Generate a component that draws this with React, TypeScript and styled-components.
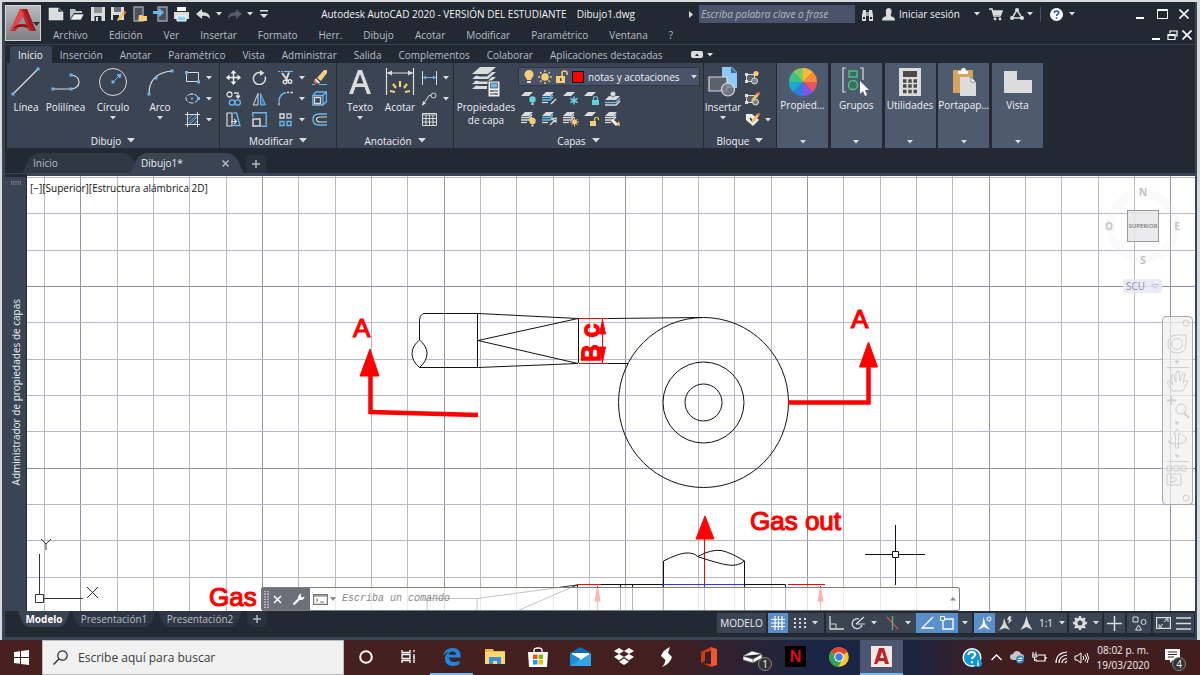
import React from "react";
import styled, { createGlobalStyle, css } from "styled-components";

const c = {
  bar: "#222933",
  panel: "#3b4453",
  tile: "#4e5a6e",
  line: "#2a323e",
  text: "#eef0f2",
  dim: "#b9bec5",
  icon: "#dcdcdc",
  blue: "#66b8ee",
  amber: "#f8cd74",
  active: "#5b8fc9",
};

const ui = `"Open Sans", "Noto Sans", sans-serif`;

const GlobalStyle = createGlobalStyle`
  *, *::before, *::after { box-sizing: border-box; }
  html, body { margin: 0; height: 100%; }
  #root { height: 100%; }
  body { font-family: ${ui}; font-size: 10px; line-height: 14px; color: ${c.text}; background: #d8dadc; overflow: hidden; }
  button, input, select { font: inherit; color: inherit; border: 0; padding: 0; margin: 0; background: none; }
  button { cursor: pointer; }
`;

/* ---------- icons ---------- */

const Svg = styled.svg`
  display: block;
  flex: none;
`;

type IconDef = { w: number; h: number; art: React.ReactNode };

const sheet = (x: number, y: number, fill = c.icon) => (
  <path d={`M${x + 4} ${y}h8l-4 4h-8z`} fill={fill} />
);
const stack = (x: number, y: number, mid = c.icon) => (
  <>
    {sheet(x, y)}
    <path d={`M${x} ${y + 5.5}h8l3-3M${x} ${y + 8}h8l3-3`} stroke={mid} strokeWidth="1.4" fill="none" />
    <path d={`M${x} ${y + 10.5}h6`} stroke={c.icon} strokeWidth="1.2" fill="none" />
  </>
);
const wheelColors = ["#f9b934", "#fb8d3a", "#e9555a", "#8255e6", "#2f7be0", "#1aa9cf", "#3fbf8a", "#7fca5b"];
const wheel = wheelColors.map((f, i) => {
  const a = ((i * 45 - 90) * Math.PI) / 180;
  const b = (((i + 1) * 45 - 90) * Math.PI) / 180;
  return (
    <path
      key={f}
      fill={f}
      d={`M15 15L${15 + 14 * Math.cos(a)} ${15 + 14 * Math.sin(a)}A14 14 0 0 1 ${15 + 14 * Math.cos(b)} ${15 + 14 * Math.sin(b)}z`}
    />
  );
});
const pencil = (
  <g>
    <path d="M8 12l5-6 2 2-5 6-3 1z" fill="#f4c25c" />
    <path d="M13 6l1.500-1.500 2 2L15 8z" fill="#e8695a" />
  </g>
);

const icons: Record<string, IconDef> = {
  caret: { w: 6, h: 4, art: <path d="M0 0h6L3 3.500z" fill={c.icon} /> },
  caretBig: { w: 8, h: 5, art: <path d="M0 0h8L4 4.500z" fill={c.icon} /> },
  play: { w: 4, h: 7, art: <path d="M0 0l4 3.500L0 7z" fill={c.icon} /> },
  logo: {
    w: 36, h: 36,
    art: (
      <>
        <path d="M14 3h7l9 22h-7l-2-4h-8l-4 4H4z" fill="#c4272d" />
        <path d="M14 3l-10 22 6-3 8-14z" fill="#e5474b" />
        <path d="M12 18l5-8 3 8z" fill="#8f9297" />
        <path d="M9 20q8-4 14 1l-2 1q-6-3-14 1z" fill="#8e171c" />
        <path d="M17 3l9 22h4L21 3z" fill="#a01d22" />
        <path d="M27 16h7l-3.500 4z" fill="#2b2f36" />
      </>
    ),
  },
  file: { w: 16, h: 14, art: <path d="M1 1h9l5 4v8H1zM10 1v4h5" fill={c.icon} stroke="#fff" strokeWidth=".5" /> },
  open: { w: 16, h: 14, art: <><path d="M1 12V2h5l1 2h6v2H5z" fill="#bfc1c4" /><path d="M5 7h10l-3 6H1z" fill="#eee" stroke={c.bar} strokeWidth=".6" /></> },
  save: { w: 16, h: 16, art: <><path d="M1 1h14v14H1z" fill={c.icon} /><path d="M4 1h8v6H4z" fill="#8c9199" /><path d="M4.500 10h7v5h-7z" fill={c.bar} /><path d="M6 11h2v4H6z" fill={c.icon} /></> },
  saveAs: { w: 17, h: 16, art: <><path d="M1 1h13v13H1z" fill={c.icon} /><path d="M4 1h7v5H4z" fill="#6a7079" /><path d="M3 9h6v5H3z" fill={c.bar} />{pencil}</> },
  openWeb: { w: 16, h: 16, art: <><path d="M2 1h9v14H2z" fill="#4a515d" stroke="#9ba0a7" strokeWidth="1.400" /><path d="M7 9h3l1 1h4v5H6z" fill={c.amber} /></> },
  saveWeb: { w: 16, h: 16, art: <><path d="M5 1h9v14H5z" fill="#4a515d" stroke="#9ba0a7" strokeWidth="1.400" /><path d="M0 5h6V2l5 4.500L6 11V8H0z" fill={c.blue} /></> },
  print: { w: 17, h: 15, art: <><path d="M4 0h9v4H4z" fill="#fff" /><path d="M1 5h15v7H1z" fill={c.icon} /><path d="M4 9h9v5H4z" fill="#8fcdf5" stroke="#fff" /></> },
  undo: { w: 15, h: 11, art: <path d="M0 5l6-5v3q8 0 8 7-3-4-8-3v3z" fill={c.icon} /> },
  redo: { w: 15, h: 11, art: <path d="M15 5L9 0v3Q1 3 1 10q3-4 8-3v3z" fill="#555c67" /> },
  custom: { w: 8, h: 8, art: <path d="M0 0h8v1.500H0zM0 4h8L4 8z" fill={c.icon} /> },
  binoc: { w: 13, h: 13, art: <><path d="M1 13V7l1-5h3v11zM8 13V2h3l1 5v6z" fill={c.icon} /><path d="M5 4h3v4H5z" fill="#9aa0a8" /><path d="M2 9h2v2H2zM9 9h2v2H9z" fill={c.bar} /></> },
  user: { w: 13, h: 13, art: <path d="M6.500 0C10 0 10 4 9 6q-.5 2 .5 2.500Q13 9 13 12.500H0Q0 9 3.500 8.500 4.500 8 4 6 3 0 6.500 0z" fill={c.icon} /> },
  cart: { w: 14, h: 13, art: <><path d="M0 1h3l2 7h6l2-5H4" stroke={c.icon} strokeWidth="1.600" fill="none" /><path d="M4 3h9l-2 4H5z" fill={c.icon} /><circle cx="6" cy="11" r="1.400" fill={c.icon} /><circle cx="11" cy="11" r="1.400" fill={c.icon} /></> },
  a360: { w: 14, h: 13, art: <><path d="M7 2L2 10h10z" stroke={c.icon} strokeWidth="1.500" fill="none" /><circle cx="7" cy="2" r="2" fill={c.icon} /><circle cx="2" cy="10" r="2" fill={c.icon} /><circle cx="12" cy="10" r="2" fill={c.icon} /></> },
  help: { w: 13, h: 13, art: <><circle cx="6.500" cy="6.500" r="6.500" fill="#fff" /><path d="M4.300 5q0-2 2.200-2t2.200 1.800q0 1-1.200 1.600-.9.500-.9 1.600M6.500 9.200v1.500" stroke="#2450b0" strokeWidth="1.600" fill="none" /></> },
  min: { w: 10, h: 11, art: <path d="M1 9h8" stroke="#fff" strokeWidth="2" /> },
  max: { w: 11, h: 10, art: <><path d="M.5.500h10v9H.5z" stroke="#fff" fill="none" /><path d="M0 1h11" stroke="#fff" strokeWidth="2" /></> },
  restore: { w: 11, h: 11, art: <path d="M3 3.500V1h7v5H8M1 4.500h7v5H1zM1 5.500h7" stroke="#fff" strokeWidth="1.200" fill="none" /> },
  close: { w: 10, h: 10, art: <path d="M.5.500l9 9M9.500.500l-9 9" stroke="#fff" strokeWidth="1.600" /> },
  closeSm: { w: 9, h: 9, art: <path d="M1 1l7 7M8 1L1 8" stroke="#fff" strokeWidth="1.500" /> },
  closeDim: { w: 7, h: 7, art: <path d="M.5.500l6 6M6.500.500l-6 6" stroke="#b5b9bf" strokeWidth="1.500" /> },
  plus: { w: 8, h: 8, art: <path d="M4 0v8M0 4h8" stroke="#b5b9bf" strokeWidth="1.500" /> },
  pill: { w: 12, h: 7, art: <><rect width="12" height="7" rx="2" fill={c.icon} /><path d="M4 5l2-2.500L8 5z" fill={c.bar} /></> },

  line: { w: 30, h: 30, art: <><path d="M2 27L27 2" stroke={c.icon} strokeWidth="1.200" /><path d="M.5 25.500h3v3h-3zM25.500.500h3v3h-3z" fill={c.blue} /></> },
  poly: { w: 30, h: 30, art: <><path d="M2 22h18q8-1 8-7t-8-7" stroke={c.icon} strokeWidth="1.200" fill="none" /><path d="M.5 20.500h3v3h-3zM18.500 20.500h3v3h-3zM18.500 6.500h3v3h-3z" fill={c.blue} /></> },
  circle: { w: 30, h: 30, art: <><circle cx="15" cy="15" r="13.500" stroke={c.icon} fill="none" /><path d="M15 15l6-6M23 7l-1 4-3-3z" stroke={c.blue} fill={c.blue} /><path d="M13.500 13.500h3v3h-3z" fill={c.blue} /></> },
  arc: { w: 30, h: 30, art: <><path d="M4 27Q4 6 27 4" stroke={c.icon} strokeWidth="1.200" fill="none" /><path d="M2.500 25.500h3v3h-3zM9.500 9.500h3v3h-3zM25.500 2.500h3v3h-3z" fill={c.blue} /></> },
  rect: { w: 15, h: 13, art: <><path d="M1.500 1.500h12v9h-12z" stroke={c.icon} fill="none" /><path d="M0 0h3v3H0zM12 9.500h3v3h-3z" fill={c.blue} /></> },
  ellipse: { w: 15, h: 13, art: <><ellipse cx="7" cy="6.500" rx="6" ry="4.500" stroke={c.icon} fill="none" strokeDasharray="5 1.500" /><path d="M6 5.500h2v2H6zM12 5h3v3h-3zM6 1h2v2H6z" fill={c.blue} /></> },
  hatch: { w: 15, h: 15, art: <><path d="M2.500 0v15M12.500 0v15M0 2.500h15M0 12.500h15" stroke={c.icon} /><path d="M3.500 7l4-4M3.500 11l8-8M5 12l7-7M9 12l3-3" stroke={c.blue} /></> },

  move: { w: 15, h: 15, art: <><path d="M7.500 1v13M1 7.500h13" stroke="#eee" strokeWidth="1.500" /><path d="M7.500 0l3 3.500h-6zM7.500 15l3-3.500h-6zM0 7.500l3.500-3v6zM15 7.500l-3.500-3v6z" fill="#eee" /></> },
  rotate: { w: 15, h: 15, art: <><path d="M9.500 3A6 6 0 1 0 13 6.500" stroke={c.icon} strokeWidth="1.500" fill="none" /><path d="M8 0v6l4.500-3z" fill={c.icon} /></> },
  trim: { w: 15, h: 15, art: <><path d="M0 1.500h6" stroke={c.blue} strokeDasharray="2 1" /><path d="M6 1.500h9" stroke={c.blue} strokeWidth="1.200" /><path d="M4 3l6 8M11 2.500L8 10" stroke={c.icon} strokeWidth="2" /><circle cx="7" cy="12" r="1.800" stroke={c.icon} strokeWidth="1.400" fill="none" /><circle cx="12" cy="11.500" r="1.800" stroke={c.icon} strokeWidth="1.400" fill="none" /></> },
  erase: { w: 15, h: 15, art: <><path d="M5 8l7-8h3v3L9 11z" fill="#f6cc80" /><path d="M4 8.500l4 4-1.500 1.200L2.500 10z" fill="#fff" /><path d="M2.500 9.500l3.500 4H3L1.500 12z" fill="#ea6158" /><path d="M0 14.500h3M7 14.500h8" stroke={c.blue} /></> },
  copy: { w: 15, h: 15, art: <><circle cx="3.500" cy="3.500" r="2.500" stroke={c.icon} strokeWidth="1.300" fill="none" /><path d="M8 2h4v4M10 4.500L12 7l2-2.500" stroke={c.icon} strokeWidth="1.300" fill="none" /><circle cx="6" cy="11.500" r="2.700" stroke={c.blue} fill="none" strokeWidth="1.300" /><circle cx="11.700" cy="11.500" r="2.700" stroke={c.blue} fill="none" strokeWidth="1.300" /></> },
  mirror: { w: 15, h: 14, art: <><path d="M6 1.500V13H1.200z" stroke={c.icon} fill="none" /><path d="M8.500 1.500V13h5z" stroke={c.blue} fill="#3479b5" /></> },
  fillet: { w: 15, h: 15, art: <><path d="M1 11Q1 3 8 1.500" stroke={c.blue} strokeWidth="1.500" fill="none" /><path d="M9 1.500h2M12.500 1.500h2.500M1 11.500v3" stroke={c.icon} strokeWidth="1.300" /></> },
  cube: { w: 15, h: 15, art: <><path d="M4 1h10.500v9.500L11 14H.8V4.500zM11 4.500V14M11 4.500L14.500 1M11 4.500H.8" stroke={c.blue} strokeWidth="1.300" fill="none" /><path d="M2.500 6.500h6v6h-6z" stroke={c.icon} strokeWidth="1.300" fill="none" /></> },
  stretch: { w: 15, h: 15, art: <><path d="M1 1h5v13H1zM5 9.500h5M8 7l2.500 2.500L8 12" stroke={c.icon} strokeWidth="1.200" fill="none" /><path d="M7.500 1h3L14 13.500H7" stroke={c.blue} fill="none" strokeWidth="1.300" /></> },
  scale: { w: 15, h: 15, art: <><path d="M.8 5V.8h13.400v13.400H9" stroke={c.blue} fill="none" strokeWidth="1.400" /><path d="M1 7h7v7H1z" stroke={c.icon} fill="none" strokeWidth="1.500" /></> },
  array: { w: 15, h: 14, art: <><path d="M2 1h4v4H2z" stroke={c.icon} fill="none" strokeWidth="1.400" /><path d="M9 1h4v4H9z" stroke="#b9c6d2" fill="none" strokeWidth="1.400" /><path d="M9 8.500h4v4H9zM2 8.500h4v4H2z" stroke={c.blue} fill="none" strokeWidth="1.400" /></> },
  offset: { w: 15, h: 13, art: <><path d="M15 1H7Q1 1 1 6.500T7 12h8" stroke={c.blue} strokeWidth="1.400" fill="none" /><path d="M15 4H8Q4.500 4 4.500 6.500T8 9h7" stroke={c.icon} fill="none" strokeWidth="1.200" /></> },

  text: { w: 30, h: 30, art: <path d="M4 27L13 3h4l9 24h-4l-2.500-7h-9L8 27zM11.500 16.500h7L15 7z" fill={c.icon} fillRule="evenodd" /> },
  dim: { w: 30, h: 30, art: <><path d="M1.500 1v27M28.500 1v27M2 6h26" stroke={c.icon} strokeWidth="1.200" /><path d="M2 6l5-2.500v5zM28 6l-5-2.500v5z" fill={c.icon} /><g stroke={c.amber} strokeWidth="2.200"><path d="M15 14v6M8 17l3 4M22 17l-3 4M5 24l5 1M25 24l-5 1" /></g></> },
  dimLin: { w: 15, h: 14, art: <><path d="M.5 0v14M14.500 0v14" stroke={c.icon} /><path d="M1 6.500h13" stroke={c.blue} /><path d="M1 6.500l3-2v4zM14 6.500l-3-2v4z" fill={c.blue} /></> },
  leader: { w: 15, h: 14, art: <><path d="M9 3.500H7L1 13" stroke={c.icon} fill="none" /><circle cx="11.500" cy="3.500" r="2.500" stroke={c.icon} fill="none" /><path d="M0 14l1-5 3 2z" fill={c.icon} /></> },
  table: { w: 15, h: 13, art: <path d="M.5.500h14v12H.5zM0 2h15M0 5.500h15M0 9h15M4 2v11M7.500 2v11M11 2v11" stroke={c.icon} fill="none" /> },

  layerProps: { w: 30, h: 30, art: <><path d="M9 0h16l-8 7H1z" fill={c.icon} /><path d="M5 8.500L1 12h16l8-7h-4l-5 4.500H9zM5 13.500L1 17h16l8-7h-4l-5 4.500H9zM5 18.500L1 22h15v-3H9z" fill={c.icon} /><path d="M17 14h12v16H17z" fill="#eee" stroke={c.panel} /><path d="M19.500 16h7v5h-7z" fill={c.blue} stroke="#333" strokeWidth=".6" /><path d="M19 24h8M19 27h8M21 23v2M25 26v2" stroke="#444" /></> },
  bulb: { w: 10, h: 14, art: <><path d="M5 0a4.500 4.500 0 0 1 2.800 8L7 10H3L2.200 8A4.500 4.500 0 0 1 5 0z" fill={c.amber} /><path d="M3 11h4v2H3z" fill="#ddd" /></> },
  sun: { w: 14, h: 14, art: <><circle cx="7" cy="7" r="3.800" fill={c.amber} /><path d="M7 0v2M7 12v2M0 7h2M12 7h2M2 2l1.500 1.500M10.500 10.500L12 12M12 2l-1.500 1.500M3.500 10.500L2 12" stroke={c.amber} strokeWidth="1.400" /></> },
  lock: { w: 12, h: 13, art: <><path d="M0 6h9v7H0z" fill={c.amber} /><path d="M6 6V3q0-2 2.500-2T11 3v2" stroke={c.amber} strokeWidth="1.500" fill="none" /><path d="M4 8h1.500v3H4z" fill="#5a4a20" /></> },
  red: { w: 12, h: 12, art: <path d="M.5.500h11v11H.5z" fill="#f00" stroke="#111" /> },
  lyOff: { w: 16, h: 15, art: <>{sheet(0, 1)}<circle cx="11.500" cy="8.500" r="3.200" fill="#62d3e0" /><path d="M10.500 12h2v2h-2z" fill="#ddd" /></> },
  lyIso: { w: 16, h: 15, art: <>{stack(0, 1, c.blue)}<path d="M9 13l5-5" stroke={c.icon} strokeWidth="1.500" /></> },
  lyFrz: { w: 16, h: 15, art: <>{sheet(0, 1)}<path d="M11 5.500v8M7.500 7.500l7 4M7.500 11.500l7-4" stroke="#62d3e0" strokeWidth="1.600" /></> },
  lyLock: { w: 16, h: 15, art: <>{sheet(0, 1)}<path d="M8 9h7v5H8z" fill="#62d3e0" /><path d="M9.500 9V7q0-1.500 2-1.500t2 1.500v2" stroke="#62d3e0" strokeWidth="1.200" fill="none" /></> },
  lyCur: { w: 16, h: 15, art: <><path d="M4 5h11l-4 4H0z" fill={c.icon} /><path d="M0 11.500h11l4-4" stroke={c.blue} strokeWidth="1.600" fill="none" /><path d="M0 14h11l4-4" stroke={c.icon} strokeWidth="1.500" fill="none" /><circle cx="8" cy="3" r="2.800" fill="#ddd" stroke={c.panel} strokeWidth=".6" /></> },
  lyOn: { w: 16, h: 15, art: <>{stack(0, 0)}<circle cx="11.500" cy="9" r="3.200" fill={c.amber} /><path d="M10.500 12.500h2v2h-2z" fill="#ddd" /></> },
  lyUniso: { w: 16, h: 15, art: <>{stack(0, 0, c.blue)}<path d="M8 13l5-5M14 6v4l-4-3z" stroke={c.icon} strokeWidth="1.300" /></> },
  lyThaw: { w: 16, h: 15, art: <>{stack(0, 0)}<circle cx="11.500" cy="10" r="2.400" fill={c.amber} /><path d="M11.500 5.500v9M7 10h9M8.500 7l6 6M14.500 7l-6 6" stroke={c.amber} /></> },
  lyUnl: { w: 16, h: 15, art: <>{sheet(0, 0)}<path d="M6 9h6v5H6z" fill={c.amber} /><path d="M10.500 9V7q0-1.500 2-1.500t2 1.500v1" stroke={c.amber} strokeWidth="1.200" fill="none" /></> },
  lyMatch: { w: 16, h: 15, art: <>{stack(0, 0)}<path d="M7 8l5 5" stroke="#eee" strokeWidth="3" /><path d="M11 13l3-4 1 5z" fill={c.amber} /></> },

  insert: { w: 30, h: 30, art: <><path d="M14 0h10l5 5v16H14z" fill="#8ccbf8" /><path d="M23 0v6h6z" fill="#2c6ea8" /><path d="M1 10h18v14H1z" fill="#5b626e" stroke={c.icon} strokeWidth="1.200" /><circle cx="20" cy="22.500" r="6.500" fill="#7b818b" fillOpacity=".8" stroke={c.icon} strokeWidth="1.200" /></> },
  blkNew: { w: 15, h: 15, art: <><path d="M1.500 4.500h8v7h-8z" stroke={c.icon} fill="#5b626e" /><path d="M0 3h3v3H0zM0 10h3v3H0z" fill={c.icon} /><circle cx="9.500" cy="11" r="3" fill="#7b818b" stroke={c.icon} /><circle cx="11" cy="3.500" r="2.600" fill={c.amber} /></> },
  blkEdit: { w: 16, h: 15, art: <><path d="M1.500 4.500h8v7h-8z" stroke={c.icon} fill="#5b626e" /><path d="M0 3h3v3H0zM0 10h3v3H0z" fill={c.icon} /><circle cx="10.500" cy="11" r="3" fill="#7b818b" stroke={c.icon} /><g transform="translate(-1 -4)">{pencil}</g></> },
  blkAttr: { w: 16, h: 15, art: <><path d="M1 2h6l7 6-6 6-7-6z" fill="#eee" /><path d="M5 6l3 4" stroke="#333" strokeWidth="1.500" /><g transform="translate(-1 -4)">{pencil}</g></> },

  wheel: { w: 30, h: 30, art: wheel },
  group: { w: 30, h: 30, art: <><path d="M5 1H2v24h3M19 1h3v12" stroke={c.icon} strokeWidth="1.200" fill="none" /><path d="M8 4h8v6H8z" stroke="#4cc47b" strokeWidth="1.400" fill="#3b6d5c" /><circle cx="12" cy="18" r="4.500" stroke="#4cc47b" strokeWidth="1.400" fill="#3b6d5c" /><path d="M19 14v13l3-3 2 5 2-1-2-5h4z" fill="#fff" /></> },
  calc: { w: 30, h: 30, art: <><path d="M4 1h22v28H4z" fill={c.icon} /><path d="M8 4h14v6H8z" fill="#4a4a4a" /><path d="M8 14h14M8 19h14M8 24.500h14" stroke="#4a4a4a" strokeWidth="3.500" strokeDasharray="3.500 1.750" /></> },
  clip: { w: 30, h: 30, art: <><path d="M4 3h20v23H4z" fill="#d9a15e" /><path d="M9 4h3q0-3 2.500-3T17 4h2v3H9z" fill="#fff" /><path d="M11 10h11l5 5v14H11z" fill={c.icon} /><path d="M22 10v5h5z" fill="#fff" stroke="#555" strokeWidth=".6" /></> },
  view: { w: 30, h: 30, art: <path d="M1 4h13v9h15v13H1z" fill={c.icon} /> },

  stGrid: { w: 14, h: 14, art: <path d="M4 0v14M7.500 0v14M11 0v14M0 3.500h14M0 7h14M0 10.500h14" stroke="#fff" strokeWidth="1.200" /> },
  stSnap: { w: 12, h: 12, art: <path d="M0 2h12M0 6h12M0 10h12" stroke={c.icon} strokeWidth="2" strokeDasharray="2 3" /> },
  stOrtho: { w: 15, h: 14, art: <><path d="M1 0v13h14" stroke={c.icon} strokeWidth="1.300" fill="none" /><path d="M2 8h5v5" stroke={c.icon} fill="none" /></> },
  stPolar: { w: 15, h: 14, art: <><path d="M9 3a5 5 0 1 0 3 6" stroke={c.icon} strokeWidth="1.300" fill="none" /><path d="M6 8l8-7M6 8h9" stroke={c.icon} strokeWidth="1.200" /></> },
  stIso: { w: 13, h: 14, art: <><path d="M1 1l11 12" stroke="#c9505a" strokeWidth="1.300" /><path d="M6.500 0v14" stroke="#59b96c" strokeWidth="1.300" /></> },
  stTrack: { w: 14, h: 14, art: <path d="M13 1L2 12h12" stroke="#fff" strokeWidth="1.300" fill="none" /> },
  stSnapObj: { w: 15, h: 15, art: <><path d="M3 3h10v10H3z" stroke="#fff" strokeWidth="1.300" fill="none" /><path d="M.5.500h4v4h-4z" stroke="#fff" fill={c.active} /></> },
  stAnnoA: { w: 15, h: 15, art: <><path d="M6.500 1l2 7 4.500 6-6-3-6 3 4.500-6z" fill="#fff" /><circle cx="12" cy="3" r="2" stroke="#fff" fill="none" /></> },
  stAnnoB: { w: 15, h: 15, art: <path d="M6 2l2 6 4 6-5-2-6 2 4-6zM11 0l3 1-2 2 2 1-4 4 1-4H9z" fill={c.icon} /> },
  stAnnoC: { w: 13, h: 14, art: <path d="M6.500 0l2 7 4 7-6-3-6 3 4-7z" fill={c.icon} /> },
  gear: { w: 14, h: 14, art: <><circle cx="7" cy="7" r="4" stroke={c.icon} strokeWidth="3" fill="none" /><path d="M7 0v3M7 11v3M0 7h3M11 7h3M2 2l2 2M10 10l2 2M12 2l-2 2M4 10l-2 2" stroke={c.icon} strokeWidth="2.400" /></> },
  stPlus: { w: 15, h: 15, art: <path d="M7.500 0v15M0 7.500h15" stroke={c.icon} strokeWidth="1.500" /> },
  stIsol: { w: 15, h: 15, art: <><path d="M1 1h5v5H1z" stroke={c.icon} fill="none" /><circle cx="11.500" cy="6" r="2.500" stroke={c.icon} fill="none" /><path d="M6.500 9l3 5h-6z" stroke={c.icon} fill="none" /></> },
  stFull: { w: 15, h: 12, art: <><path d="M.6.600h13.800v10.800H.6z" stroke={c.icon} fill="none" strokeWidth="1.200" /><path d="M8 5l4-3M12 2H9M12 2v3M7 7l-4 3M3 10h3M3 10V7" stroke={c.icon} /></> },
  stMenu: { w: 15, h: 13, art: <path d="M0 1h15M0 6.500h15M0 12h15" stroke={c.icon} strokeWidth="1.600" /> },
  wrench: { w: 13, h: 13, art: <><path d="M1.500 11.500L7 6" stroke="#fff" strokeWidth="2.400" /><path d="M12.500 3.500Q12 7.500 8 7 5.500 6.500 6 4.500 6.500 1 9.500.500L8.500 3l1.500 1.500z" fill="#fff" /></> },
  prompt: { w: 15, h: 11, art: <><path d="M.6.600h13.800v9.800H.6zM0 2h15" stroke="#777" fill="none" strokeWidth="1.200" /><path d="M3 4.500l2 1.500-2 1.500M7 8h4" stroke="#777" fill="none" /></> },
  caretGrey: { w: 6, h: 4, art: <path d="M0 0h6L3 4z" fill="#888" /> },
  caretUp: { w: 6, h: 4, art: <path d="M0 3.500h6L3 0z" fill="#888" /> },
  caretFaint: { w: 8, h: 5, art: <path d="M.5.500h7L4 4.500z" fill="none" stroke="#c3c7d6" /> },
  grip: { w: 5, h: 17, art: <path d="M1 0v17M4 0v17" stroke="#ddd" strokeWidth="1.400" strokeDasharray="1.300 1.300" /> },
  dots: { w: 10, h: 4, art: <path d="M0 .8h10M0 3h10" stroke="#9aa1ab" strokeWidth="1.200" strokeDasharray="1.200 1" /> },

  win: { w: 15, h: 15, art: <path d="M0 2l6-.8V7H0zM7 1l8-1v7H7zM0 8h6v5.800L0 13zM7 8h8v7l-8-1z" fill="#fff" /> },
  search: { w: 15, h: 15, art: <><circle cx="9.500" cy="5.500" r="4.700" stroke="#222" strokeWidth="1.200" fill="none" /><path d="M6 9l-5.500 5.500" stroke="#222" strokeWidth="1.300" /></> },
  cortana: { w: 14, h: 14, art: <circle cx="7" cy="7" r="5.800" stroke="#fff" strokeWidth="2" fill="none" /> },
  taskview: { w: 15, h: 13, art: <path d="M1 0v2.500h8V0M1 13v-2.500h8V13M1 4.500h8v4H1zM13 0v2M13 4v2M13 8v5M12 7h2" stroke="#fff" strokeWidth="1.300" fill="none" /> },
  edge: { w: 18, h: 18, art: <path d="M0 8Q2 0 9.500 0 18 0 18 9.500H6q.5 4.500 5.500 4.500 3 0 5-1.500v3.800Q14 18 10 18q-8 0-8-8 0-4 5-6.500Q2.500 4 0 8zM6 6.800h7Q13 3.500 9.500 3.500T6 6.800z" fill="#1c86e0" fillRule="evenodd" /> },
  folder: { w: 20, h: 17, art: <><path d="M0 1h8l1 2h11v13H0z" fill="#f3b944" /><path d="M0 4h20v12H0z" fill="#fcd773" /><path d="M4 16V9h12v7h-4v-3H8v3z" fill="#3f90d8" /></> },
  store: { w: 20, h: 20, art: <><path d="M6 6V3q0-2 4-2t4 2v3" stroke="#fff" strokeWidth="1.300" fill="none" /><path d="M0 5h20l-1 15H1z" fill="#fff" /><path d="M5 7.500h4.500V12H5z" fill="#f25022" /><path d="M10.500 7.500H15V12h-4.500z" fill="#7fba00" /><path d="M5 13h4.500v4.500H5z" fill="#00a4ef" /><path d="M10.500 13H15v4.500h-4.500z" fill="#ffb900" /></> },
  mail: { w: 21, h: 19, art: <><path d="M0 6l10.500-6L21 6v13H0z" fill="#0f6cbd" /><path d="M2 6h17v8H2z" fill="#fff" /><path d="M0 6l10.500 7L21 6v13H0z" fill="#33a3e8" /><path d="M0 19l10.500-7L0 6z" fill="#1f8ad6" /></> },
  dropbox: { w: 20, h: 18, art: <path d="M5 0l5 3-5 3-5-3zM15 0l5 3-5 3-5-3zM5 6l5 3-5 3.200L0 9zM15 6l5 3-5 3.200L10 9zM10 10.500l5 3.200-5 3.300-5-3.300z" fill="#fff" /> },
  bolt: { w: 11, h: 20, art: <path d="M9 0L7 6l4 4Q9 17 1 20q3-3 3.500-7L0 9Q2 3 9 0z" fill="#fff" /> },
  office: { w: 17, h: 20, art: <><path d="M10 0l6 2v16l-6 2z" fill="#f0562e" /><path d="M10 0v4L4 5.500V14l-4 2V5zM2 16.500l8 .5v3z" fill="#d43a12" /></> },
  drive: { w: 20, h: 15, art: <path d="M0 7l9-5 10 3v4l-9 5L0 11zM0 7l10 3 9-5M10 10v4" fill="#fff" stroke="#555" strokeWidth=".8" /> },
  chrome: { w: 20, h: 20, art: <><circle cx="10" cy="10" r="9.800" fill="#f7c72e" /><path d="M10 10L1.600 5A9.800 9.800 0 0 1 18.500 5z" fill="#e2432f" /><path d="M10 10L1.500 5A9.800 9.800 0 0 0 9 19.800l5-8z" fill="#31a351" /><circle cx="10" cy="10" r="4.800" fill="#fff" /><circle cx="10" cy="10" r="3.700" fill="#3f7fe8" /></> },
  acad: { w: 21, h: 21, art: <><path d="M0 0h21v21H0z" fill="#f6e6e2" /><path d="M8 2h5l5 16h-4l-1-3H8l-2 3H3zM9 12h4l-2-6z" fill="#b9242b" fillRule="evenodd" /></> },
  tHelp: { w: 20, h: 20, art: <><circle cx="10" cy="9.500" r="8.800" fill="#1496d4" stroke="#fff" strokeWidth="1.400" /><path d="M6.500 7q0-3 3.300-3t3.300 2.600q0 1.400-1.600 2.300-1.500.8-1.500 2.400M9.900 13.200v2" stroke="#fff" strokeWidth="2" fill="none" /><circle cx="16" cy="15" r="4" fill="#1496d4" /><path d="M16 12.500v1M16 14.500v3.500" stroke="#fff" strokeWidth="1.500" /></> },
  tUp: { w: 11, h: 7, art: <path d="M.5 6l5-5 5 5" stroke="#fff" strokeWidth="1.300" fill="none" /> },
  tCloud: { w: 15, h: 13, art: <><path d="M4 9Q0 9 0 6t3-3q1-3 4-3t4 3q3 0 3 3t-3 3z" fill="#c9c5c5" /><circle cx="10" cy="8.500" r="4" fill="#2b86dc" /><path d="M8 7.500h4l-1.500-1.500M12 9.500H8l1.500 1.500" stroke="#fff" fill="none" /></> },
  tBatt: { w: 15, h: 11, art: <><path d="M6 3h7v6H4V7M14 5v2" stroke="#fff" strokeWidth="1.200" fill="none" /><path d="M1 0v3M4 0v3M0 3h5v2H0zM2.500 5v4" stroke="#fff" fill="none" /></> },
  tWifi: { w: 13, h: 13, art: <path d="M1 12Q1 2 12 1M4 12Q4 5 12 4M7 12Q7 8 12 7.500M10 12l2-2" stroke="#fff" strokeWidth="1.200" fill="none" /> },
  tVol: { w: 15, h: 12, art: <path d="M1 4h2l4-3v10L3 8H1zM9 4q1.500 2 0 4M11 2.500q3 3.500 0 7M13 1q3 5 0 10" stroke="#fff" fill="none" /> },
  tNote: { w: 16, h: 15, art: <><path d="M0 0h15v11H8l-3 3v-3H0z" fill="#fff" /><path d="M3 3h9M3 5.500h9M3 8h6" stroke="#3f1d1d" /></> },
};

const Icon = ({ name }: { name: string }) => {
  const i = icons[name];
  return (
    <Svg width={i.w} height={i.h} viewBox={`0 0 ${i.w} ${i.h}`} aria-hidden="true">
      {i.art}
    </Svg>
  );
};

/* ---------- shell ---------- */

const Screen = styled.div`
  height: 100%;
  display: flex;
  flex-direction: column;
`;
const Window = styled.main`
  flex: 1;
  min-height: 0;
  margin: 2px 3px 0 2px;
  border: solid ${c.panel};
  border-width: 0 2px 3px 3px;
  background: ${c.bar};
  display: flex;
  flex-direction: column;
`;
const Row = styled.div<{ $gap?: number }>`
  display: flex;
  align-items: center;
  gap: ${(p) => p.$gap ?? 0}px;
`;
const IconButton = styled.button<{ $w?: number; $h?: number }>`
  display: flex;
  align-items: center;
  justify-content: center;
  flex: none;
  width: ${(p) => p.$w ?? 21}px;
  height: ${(p) => p.$h ?? 21}px;
`;

/* ---------- header ---------- */

const Header = styled.header`
  display: grid;
  grid-template-columns: 36px 1fr;
  grid-template-rows: 24px 18px;
  column-gap: 4px;
  border-bottom: 1px solid #363f4c;
`;
const AppButton = styled.button`
  grid-row: span 2;
  height: 36px;
  margin-top: 3px;
  background: linear-gradient(#b9bbbd, #7c7f83);
  border: 1px solid #d5d5d5;
  overflow: hidden;
`;
const Title = styled.h1`
  flex: 1;
  margin: 0;
  padding-right: 6px;
  display: flex;
  justify-content: center;
  gap: 10px;
  font-size: 10px;
  font-weight: 400;
  color: #f2f3f4;
  white-space: nowrap;
`;
const HelpSearch = styled.input`
  width: 156px;
  height: 18px;
  margin: 0 2px 0 6px;
  padding: 0 2px;
  background: #49546a;
  font-style: italic;
  &::placeholder { color: #b4bac4; opacity: 1; }
`;
const Divider = styled.i`
  width: 1px;
  height: 15px;
  margin: 0 7px;
  background: #4a5362;
`;
const SignIn = styled.button`
  display: flex;
  align-items: center;
  gap: 4px;
  width: 91px;
  height: 21px;
  padding-left: 4px;
`;
const Session = styled(Row)`
  padding-right: 50px;
`;
const WindowButtons = styled.div<{ $small?: boolean }>`
  display: flex;
  margin-left: auto;
  padding-right: ${(p) => (p.$small ? 1 : 0)}px;
`;
const MenuRow = styled.nav`
  display: flex;
  align-items: center;
  gap: 21px;
  padding-left: 8px;
  color: ${c.dim};
`;

/* ---------- ribbon ---------- */

const RibbonTabs = styled.nav`
  display: flex;
  align-items: flex-end;
  height: 18px;
  padding-left: 5px;
`;
const RibbonTab = styled.button<{ $on?: boolean }>`
  height: 17px;
  padding: 0 9px 0 8px;
  white-space: nowrap;
  color: ${(p) => (p.$on ? "#f4f5f6" : c.dim)};
  background: ${(p) => (p.$on ? c.panel : "none")};
  border-radius: 2px 2px 0 0;
`;
const Ribbon = styled.section`
  display: flex;
  gap: 1px;
  height: 85px;
  padding-left: 2px;
`;
const Panel = styled.section<{ $w: number }>`
  width: ${(p) => p.$w}px;
  flex: none;
  display: flex;
  flex-direction: column;
  background: ${c.panel};
`;
const PanelBody = styled.div`
  flex: 1;
  display: flex;
  padding-top: 4px;
`;
const PanelTitle = styled.button`
  display: flex;
  align-items: center;
  justify-content: center;
  gap: 6px;
  height: 15px;
`;
const BigTool = styled.button<{ $w: number }>`
  width: ${(p) => p.$w}px;
  height: 64px;
  flex: none;
  display: flex;
  flex-direction: column;
  align-items: center;
  line-height: 13px;
  white-space: nowrap;
  svg + span { margin-top: 4px; }
  span + svg { margin-top: 2px; }
`;
const Tools = styled.div<{ $cols: string }>`
  display: grid;
  grid-template-columns: ${(p) => p.$cols};
  grid-auto-rows: 21px;
  align-content: start;
  place-items: center;
`;
const Tool = styled.button`
  display: grid;
  place-items: center;
  width: 100%;
  height: 100%;
`;
const LayerArea = styled.div`
  display: flex;
  flex-direction: column;
`;
const LayerPicker = styled.label`
  display: flex;
  align-items: center;
  gap: 4px;
  width: 182px;
  height: 19px;
  margin-bottom: 2px;
  padding: 0 2px 0 5px;
  background: #49546a;
  border: 1px solid #2f3744;
  select { flex: 1; min-width: 0; appearance: none; outline: 0; }
`;
const Tiles = styled.div`
  display: flex;
  justify-content: space-between;
  width: 266px;
`;
const Tile = styled.button`
  width: 51px;
  display: flex;
  flex-direction: column;
  align-items: center;
  padding: 4px 0;
  background: ${c.tile};
  white-space: nowrap;
  span { margin-top: 1px; flex: 1; }
`;

/* ---------- document tabs ---------- */

const tabShape = css<{ $on?: boolean }>`
  position: relative;
  isolation: isolate;
  &::before, &::after {
    content: "";
    position: absolute;
    z-index: -1;
    top: 0;
    bottom: 0;
    background: ${(p) => (p.$on ? c.panel : "#2f3744")};
  }
`;
const DocTabs = styled.nav`
  display: flex;
  align-items: flex-end;
  height: 26px;
  padding-left: 22px;
  border-bottom: 1px solid ${c.panel};
`;
const DocTab = styled.button<{ $on?: boolean; $w: number }>`
  ${tabShape}
  width: ${(p) => p.$w}px;
  height: 20px;
  display: flex;
  align-items: center;
  justify-content: space-between;
  padding: 0 10px 0 6px;
  color: ${(p) => (p.$on ? c.text : c.dim)};
  &::before { left: 0; right: 40%; transform: skewX(-24deg); border-radius: 8px 0 0 0; }
  &::after { left: 40%; right: 0; transform: skewX(24deg); border-radius: 0 8px 0 0; }
`;
const NewTab = styled.button<{ $below?: boolean }>`
  width: 20px;
  height: ${(p) => (p.$below ? 16 : 18)}px;
  margin: 0 ${(p) => (p.$below ? 4 : 7)}px;
  display: grid;
  place-items: center;
  background: #2a323e;
  border-radius: ${(p) => (p.$below ? "0 0 6px 6px" : "6px 6px 0 0")};
`;

/* ---------- workspace ---------- */

const Workspace = styled.div`
  flex: 1;
  min-height: 0;
  display: flex;
`;
const Palette = styled.aside`
  width: 22px;
  flex: none;
  display: flex;
  flex-direction: column;
  align-items: center;
  background: ${c.panel};
  border-top: 3px solid ${c.bar};
  border-right: 1px solid ${c.bar};
  padding-top: 4px;
  span {
    writing-mode: vertical-rl;
    transform: rotate(180deg);
    margin-top: 114px;
    white-space: nowrap;
  }
`;
const Viewport = styled.section`
  flex: 1;
  position: relative;
  overflow: hidden;
  background: #fff;
  border-top: 2px solid ${c.panel};
`;
const Drawing = styled.svg`
  position: absolute;
  inset: 0;
  width: 100%;
  height: 100%;
  font-family: "Liberation Sans", Arial, sans-serif;
`;
const ViewLabel = styled.div`
  position: absolute;
  left: 3px;
  top: 5px;
  color: #111;
`;
const ViewCube = styled.div`
  position: absolute;
  right: 0;
  top: 8px;
  width: 104px;
  display: grid;
  grid-template-columns: 36px 32px 36px;
  grid-template-rows: 16px 52px 16px;
  place-items: center;
  font-weight: 700;
  color: #bcbcbc;
  &::before {
    content: "";
    position: absolute;
    inset: 5px 15px;
    border: 9px solid rgba(225, 225, 225, 0.18);
    border-radius: 50%;
  }
`;
const Face = styled.button`
  position: relative;
  width: 32px;
  height: 32px;
  background: rgba(232, 232, 234, 0.85);
  border: 1px solid #999;
  font: 600 6px/8px "Open Sans", sans-serif;
  color: #777;
`;
const Ucs = styled.button`
  position: absolute;
  right: 33px;
  top: 103px;
  width: 39px;
  height: 14px;
  display: flex;
  align-items: center;
  justify-content: space-around;
  background: rgba(232, 232, 244, 0.85);
  color: #8d8f9c;
  border-radius: 3px;
`;
const NavBar = styled.div`
  position: absolute;
  right: 2px;
  top: 140px;
  width: 31px;
  height: 189px;
  background: rgba(240, 240, 240, 0.7);
  border: 1px solid #aaa;
  border-radius: 4px;
`;
const CommandLine = styled.form`
  position: absolute;
  left: 234px;
  right: 235px;
  bottom: 0;
  height: 24px;
  display: flex;
  border: 1px solid #7a7d82;
  border-radius: 2px;
  background: rgba(255, 255, 255, 0.7);
`;
const CommandGrip = styled.div`
  display: flex;
  align-items: center;
  gap: 4px;
  width: 48px;
  padding: 0 5px 0 2px;
  background: #6b7079;
  svg:last-child { margin-left: auto; }
`;
const CommandField = styled.label`
  flex: 1;
  display: flex;
  align-items: center;
  gap: 2px;
  padding: 0 3px;
  input {
    flex: 1;
    margin-left: 4px;
    outline: 0;
    font: italic 10px/14px "Liberation Mono", monospace;
  }
  input::placeholder { color: #888; opacity: 1; }
`;

/* ---------- status bar ---------- */

const StatusBar = styled.footer`
  display: flex;
  justify-content: space-between;
  height: 26px;
  padding: 0 1px 0 12px;
`;
const LayoutTabs = styled.nav`
  display: flex;
`;
const LayoutTab = styled.button<{ $on?: boolean; $w: number }>`
  ${tabShape}
  width: ${(p) => p.$w}px;
  height: 16px;
  display: flex;
  align-items: center;
  justify-content: center;
  font-weight: ${(p) => (p.$on ? 700 : 400)};
  color: ${(p) => (p.$on ? "#fff" : c.dim)};
  &::before { left: 4px; right: 40%; transform: skewX(20deg); border-radius: 0 0 0 6px; }
  &::after { left: 40%; right: 4px; transform: skewX(-20deg); border-radius: 0 0 6px 0; }
`;
const StatusTools = styled(Row)`
  align-items: flex-start;
  padding-top: 2px;
`;
const StatusGroup = styled.div`
  display: flex;
  background: ${c.panel};
`;
const StatusButton = styled.button<{ $w: number; $on?: boolean }>`
  width: ${(p) => p.$w}px;
  height: 20px;
  display: flex;
  align-items: center;
  justify-content: center;
  gap: 6px;
  background: ${(p) => (p.$on ? c.active : "none")};
`;

/* ---------- taskbar ---------- */

const Taskbar = styled.footer`
  height: 35px;
  flex: none;
  display: flex;
  background: linear-gradient(90deg, #47201f 0%, #42201f 55%, #2c2233 62%, #1a2646 68%, #1c2440 76%, #33202c 80%, #421d1d 84%);
`;
const SearchBox = styled.label`
  width: 302px;
  display: flex;
  align-items: center;
  gap: 10px;
  padding-left: 10px;
  background: #f1f1f1;
  border: 1px solid #bbb;
  input { flex: 1; outline: 0; font-size: 12px; color: #333; }
  input::placeholder { color: #3b3b3b; opacity: 1; }
`;
const TaskButton = styled.button<{ $open?: boolean; $on?: boolean }>`
  position: relative;
  width: 43px;
  display: grid;
  place-items: center;
  background: ${(p) => (p.$on ? "#4c5670" : "none")};
  border-bottom: 2px solid ${(p) => (p.$on || p.$open ? "#76b9ed" : "transparent")};
`;
const Badge = styled.span`
  position: absolute;
  left: 27px;
  bottom: 2px;
  width: 14px;
  height: 14px;
  border-radius: 50%;
  border: 1px solid #888;
  background: #333;
  color: #fff;
  font-size: 10px;
  line-height: 12px;
  text-align: center;
`;
const Netflix = styled.span`
  width: 21px;
  height: 21px;
  background: #000;
  color: #e50914;
  font: 700 16px/21px "Liberation Sans", sans-serif;
`;
const Tray = styled.div`
  display: flex;
  margin-left: auto;
`;
const Clock = styled.time`
  width: 66px;
  align-self: center;
  text-align: center;
  line-height: 15px;
`;
const Notices = styled(TaskButton)`
  width: 44px;
  padding-right: 10px;
  ${Badge} { left: 16px; }
`;

/* ---------- data ---------- */

const menus = ["Archivo", "Edición", "Ver", "Insertar", "Formato", "Herr.", "Dibujo", "Acotar", "Modificar", "Paramétrico", "Ventana", "?"];
const ribbonTabs = ["Inicio", "Inserción", "Anotar", "Paramétrico", "Vista", "Administrar", "Salida", "Complementos", "Colaborar", "Aplicaciones destacadas"];
const quick: [string, number][] = [
  ["file", 21], ["open", 21], ["save", 21], ["saveAs", 21], ["openWeb", 21], ["saveWeb", 21], ["print", 21],
  ["undo", 23], ["caret", 8], ["redo", 23], ["caret", 8], ["custom", 19],
];
const modifyTools = ["move", "rotate", "trim", "caret", "erase", "copy", "mirror", "fillet", "caret", "cube", "stretch", "scale", "array", "caret", "offset"];
const layerTools = ["lyOff", "lyIso", "lyFrz", "lyLock", "lyCur", "lyOn", "lyUniso", "lyThaw", "lyUnl", "lyMatch"];
const tiles: [string, string][] = [["wheel", "Propied..."], ["group", "Grupos"], ["calc", "Utilidades"], ["clip", "Portapap..."], ["view", "Vista"]];
const taskApps = ["cortana", "taskview", "edge", "folder", "store", "mail", "dropbox", "bolt", "office", "drive"];
const trayIcons: [string, number][] = [["tHelp", 26], ["tUp", 22], ["tCloud", 21], ["tBatt", 22], ["tWifi", 22], ["tVol", 18]];

const GRID = 36.33;

const GridLines = () => (
  <g shapeRendering="crispEdges">
    {Array.from({ length: 60 }, (_, i) => (
      <path key={`v${i}`} d={`M${Math.round(17 + i * GRID) + 0.5} 0V2000`} stroke={i % 5 === 1 ? "#8e93a8" : "#b7bac6"} />
    ))}
    {Array.from({ length: 40 }, (_, i) => (
      <path key={`h${i}`} d={`M0 ${Math.round(1 + i * GRID) + 0.5}H3000`} stroke={i % 5 === 3 ? "#8e93a8" : "#b7bac6"} />
    ))}
  </g>
);

const Plan = () => (
  <g transform="translate(-27 -176)" fill="none" stroke="#111">
    <path d="M419.500 340V320Q419.500 316 423 313.500H477.500V367.500H419.500" />
    <path d="M419.500 340Q412 346 412 353.500T419.500 367.500Q427 361 427 353.500T419.500 340z" fill="#fff" />
    <path d="M478 313.500L578 318.500M478 367.500L578 363.500M578 318.500L478 340.500L578 363.500M578.500 318V363M608 318.500L703 317.500M608 363.500H628" />
    <circle cx="703.500" cy="402.500" r="85" />
    <circle cx="703.500" cy="402.500" r="40.500" />
    <circle cx="703.500" cy="402.500" r="18.500" />
    <g stroke="#f00">
      <path d="M579 318.500H608M579 363.500H608M602.500 319V363" />
      <path d="M602.500 320l3 14h-6zM602.500 362l3-15h-6z" fill="#f00" />
      <path d="M370.500 372V412L478 415M788 402.500H868.500V364" strokeWidth="4.500" />
      <path d="M370 349l9 27h-19zM868.500 342l9 25h-18zM705 516l9 23h-18z" fill="#f00" />
      <path d="M704.500 538V585" />
      <path d="M577 584.500H601M788 584.500H825" />
      <path d="M597.500 586V611M820.500 586V611M597.500 587l2.500 14h-5zM820.500 587l2.500 14h-5z" fill="#f00" />
    </g>
    <path d="M663.500 585V561Q678 553.500 686 553T697.500 556.500Q712 549 721 550.500T744.500 561V585" />
    <path d="M697.500 556.500Q718 563.500 728 565T744.500 561M601 584.500H785.500V611M577.500 585V611M620.500 585V611M632.500 585V611M663.500 585V611M744.500 585V611" />
    <path d="M577 585L477 598.500H427V611M577 585L517 611M477 598.500V611" stroke="#333" />
    <path d="M663 584.500H744M704.500 585V611" stroke="#33f" />
    <g fill="#f00" stroke="#f00" strokeWidth="1.200" fontSize="26">
      <text x="353" y="337">A</text>
      <text x="851" y="328">A</text>
      <text x="750" y="530">Gas out</text>
      <text x="209" y="606">Gas</text>
      <g strokeWidth="2">
        <text transform="translate(600 362) rotate(-90)">B</text>
        <text transform="translate(599 337) rotate(-90)">c</text>
      </g>
    </g>
    <g stroke="#333">
      <path d="M39.500 554V595M43 598.500H83M35.500 594.500H43.500V602.500H35.500z" />
      <path d="M41 539l5 5 5-5M46 544v6M87 587l11 11M98 587L87 598" />
    </g>
    <path d="M865 554.500H892M898 554.500H925M895.500 525V551M895.500 557V585M892.500 551.500h6v6h-6z" />
  </g>
);

const NavArt = () => (
  <Svg width="28" height="186" viewBox="0 0 28 186" fill="none" stroke="#cfcfcf">
    <circle cx="23" cy="6" r="3" />
    <path d="M5 27q0-9 9-9h9v9q0 9-9 9t-9-9z" />
    <circle cx="14" cy="27" r="5.500" />
    <path d="M12 44h4l-2 2.500zM12 105h4l-2 2.500zM12 138h4l-2 2.500z" fill="#cfcfcf" />
    <path d="M4 50.500h22M4 144.500h22" />
    <path d="M9 74L4 65l3-1 3 4-2-9 2-2 3 8V55l3-1 1 10 3-8 2 1-2 9 3-3 2 1-5 10z" />
    <path d="M8 79v9M4 83.500h9" strokeWidth="2" />
    <circle cx="18" cy="92" r="5" />
    <path d="M21 96l5 5" strokeWidth="2" />
    <path d="M12.500 131v-14h-2l3.500-5 3.500 5h-2v14zM19 118q7 3 3 7-9 4-15 0M9 121l-4 4 5 2" />
    <path d="M4 149h5v5H4zM11 149h5v5h-5zM18 149h5v5h-5zM4 157h14v11H4zM8 159v7l6-3.500z" />
    <circle cx="23" cy="181" r="3" />
  </Svg>
);

const T = ({ n }: { n: string }) => (
  <Tool type="button" aria-label={n}>
    <Icon name={n} />
  </Tool>
);

const PanelFoot = ({ children }: { children: string }) => (
  <PanelTitle>
    {children}
    <Icon name="caretBig" />
  </PanelTitle>
);

export default function App() {
  return (
    <Screen>
      <GlobalStyle />
      <Window>
        <Header>
          <AppButton aria-label="AutoCAD"><Icon name="logo" /></AppButton>
          <Row>
            {quick.map(([n, w], i) => (
              <IconButton key={i} $w={w} aria-label={n}><Icon name={n} /></IconButton>
            ))}
            <Title>
              <span>Autodesk AutoCAD 2020 - VERSIÓN DEL ESTUDIANTE</span>
              <span>Dibujo1.dwg</span>
            </Title>
            <Icon name="play" />
            <HelpSearch aria-label="Buscar ayuda" placeholder="Escriba palabra clave o frase" />
            <Session>
              <IconButton aria-label="Buscar"><Icon name="binoc" /></IconButton>
              <SignIn><Icon name="user" />Iniciar sesión</SignIn>
              <IconButton $w={16} aria-label="Opciones de sesión"><Icon name="caret" /></IconButton>
              <IconButton $w={22} aria-label="Tienda"><Icon name="cart" /></IconButton>
              <IconButton $w={20} aria-label="A360"><Icon name="a360" /></IconButton>
              <Icon name="caret" />
              <Divider />
              <IconButton $w={17} aria-label="Ayuda"><Icon name="help" /></IconButton>
              <IconButton $w={14} aria-label="Más ayuda"><Icon name="caret" /></IconButton>
            </Session>
            <WindowButtons>
              <IconButton $w={22} aria-label="Minimizar"><Icon name="min" /></IconButton>
              <IconButton $w={22} aria-label="Maximizar"><Icon name="max" /></IconButton>
              <IconButton $w={22} aria-label="Cerrar"><Icon name="close" /></IconButton>
            </WindowButtons>
          </Row>
          <MenuRow>
            {menus.map((m) => <button key={m}>{m}</button>)}
            <WindowButtons $small>
              <IconButton $w={16} $h={16} aria-label="Minimizar dibujo"><Icon name="min" /></IconButton>
              <IconButton $w={16} $h={16} aria-label="Restaurar dibujo"><Icon name="restore" /></IconButton>
              <IconButton $w={14} $h={16} aria-label="Cerrar dibujo"><Icon name="close" /></IconButton>
            </WindowButtons>
          </MenuRow>
        </Header>

        <RibbonTabs>
          {ribbonTabs.map((t, i) => <RibbonTab key={t} $on={i === 0}>{t}</RibbonTab>)}
          <IconButton $w={60} $h={17} aria-label="Minimizar cinta"><Row $gap={4}><Icon name="pill" /><Icon name="caret" /></Row></IconButton>
        </RibbonTabs>

        <Ribbon>
          <Panel $w={212}>
            <PanelBody>
              <BigTool $w={38}><Icon name="line" /><span>Línea</span></BigTool>
              <BigTool $w={41}><Icon name="poly" /><span>Polilínea</span></BigTool>
              <BigTool $w={54}><Icon name="circle" /><span>Círculo</span><Icon name="caret" /></BigTool>
              <BigTool $w={40}><Icon name="arc" /><span>Arco</span><Icon name="caret" /></BigTool>
              <Tools $cols="25px 8px">
                <T n="rect" /><T n="caret" /><T n="ellipse" /><T n="caret" /><T n="hatch" /><T n="caret" />
              </Tools>
            </PanelBody>
            <PanelFoot>Dibujo</PanelFoot>
          </Panel>
          <Panel $w={116}>
            <PanelBody>
              <Tools $cols="26px 26px 26px 8px 26px">
                {modifyTools.map((n, i) => <T key={i} n={n} />)}
              </Tools>
            </PanelBody>
            <PanelFoot>Modificar</PanelFoot>
          </Panel>
          <Panel $w={116}>
            <PanelBody>
              <BigTool $w={46}><Icon name="text" /><span>Texto</span><Icon name="caret" /></BigTool>
              <BigTool $w={34}><Icon name="dim" /><span>Acotar</span></BigTool>
              <Tools $cols="25px 8px">
                <T n="dimLin" /><T n="caret" /><T n="leader" /><T n="caret" /><T n="table" />
              </Tools>
            </PanelBody>
            <PanelFoot>Anotación</PanelFoot>
          </Panel>
          <Panel $w={249}>
            <PanelBody>
              <BigTool $w={64}><Icon name="layerProps" /><span>Propiedades<br />de capa</span></BigTool>
              <LayerArea>
                <LayerPicker>
                  <Icon name="bulb" /><Icon name="sun" /><Icon name="lock" /><Icon name="red" />
                  <select aria-label="Capa actual"><option>notas y acotaciones</option></select>
                  <Icon name="caret" />
                </LayerPicker>
                <Tools $cols="repeat(5, 21px)">
                  {layerTools.map((n) => <T key={n} n={n} />)}
                </Tools>
              </LayerArea>
            </PanelBody>
            <PanelFoot>Capas</PanelFoot>
          </Panel>
          <Panel $w={72}>
            <PanelBody>
              <BigTool $w={38}><Icon name="insert" /><span>Insertar</span><Icon name="caret" /></BigTool>
              <Tools $cols="21px 10px">
                <T n="blkNew" /><i /><T n="blkEdit" /><i /><T n="blkAttr" /><T n="caret" />
              </Tools>
            </PanelBody>
            <PanelFoot>Bloque</PanelFoot>
          </Panel>
          <Tiles>
            {tiles.map(([n, label]) => (
              <Tile key={n}><Icon name={n} /><span>{label}</span><Icon name="caret" /></Tile>
            ))}
          </Tiles>
        </Ribbon>

        <DocTabs>
          <DocTab $w={108}>Inicio</DocTab>
          <DocTab $w={104} $on>Dibujo1*<Icon name="closeDim" /></DocTab>
          <NewTab aria-label="Nuevo dibujo"><Icon name="plus" /></NewTab>
        </DocTabs>

        <Workspace>
          <Palette>
            <Icon name="dots" />
            <span>Administrador de propiedades de capas</span>
          </Palette>
          <Viewport>
            <Drawing aria-label="Dibujo">
              <GridLines />
              <Plan />
            </Drawing>
            <ViewLabel>[−][Superior][Estructura alámbrica 2D]</ViewLabel>
            <ViewCube>
              <i /><span>N</span><i />
              <span>O</span><Face>SUPERIOR</Face><span>E</span>
              <i /><span>S</span><i />
            </ViewCube>
            <Ucs>SCU<Icon name="caretFaint" /></Ucs>
            <NavBar><NavArt /></NavBar>
            <CommandLine>
              <CommandGrip><Icon name="grip" /><Icon name="closeSm" /><Icon name="wrench" /></CommandGrip>
              <CommandField>
                <Icon name="prompt" /><Icon name="caretGrey" />
                <input aria-label="Línea de comando" placeholder="Escriba un comando" />
                <Icon name="caretUp" />
              </CommandField>
            </CommandLine>
          </Viewport>
        </Workspace>

        <StatusBar>
          <LayoutTabs>
            <LayoutTab $w={54} $on>Modelo</LayoutTab>
            <LayoutTab $w={86}>Presentación1</LayoutTab>
            <LayoutTab $w={86}>Presentación2</LayoutTab>
            <NewTab $below aria-label="Nueva presentación"><Icon name="plus" /></NewTab>
          </LayoutTabs>
          <StatusTools $gap={2}>
            <StatusGroup><StatusButton $w={49}>MODELO</StatusButton></StatusGroup>
            <StatusGroup>
              <StatusButton $w={20} $on aria-label="Rejilla"><Icon name="stGrid" /></StatusButton>
              <StatusButton $w={36} aria-label="Forzado"><Icon name="stSnap" /><Icon name="caret" /></StatusButton>
            </StatusGroup>
            <StatusGroup>
              <StatusButton $w={20} aria-label="Orto"><Icon name="stOrtho" /></StatusButton>
              <StatusButton $w={35} aria-label="Polar"><Icon name="stPolar" /><Icon name="caret" /></StatusButton>
              <StatusButton $w={35} aria-label="Isométrico"><Icon name="stIso" /><Icon name="caret" /></StatusButton>
              <StatusButton $w={21} $on aria-label="Rastreo"><Icon name="stTrack" /></StatusButton>
              <StatusButton $w={21} $on aria-label="Referencia"><Icon name="stSnapObj" /></StatusButton>
              <StatusButton $w={14} aria-label="Opciones de referencia"><Icon name="caret" /></StatusButton>
            </StatusGroup>
            <StatusGroup>
              <StatusButton $w={21} $on aria-label="Visibilidad de anotación"><Icon name="stAnnoA" /></StatusButton>
              <StatusButton $w={21} aria-label="Escala automática"><Icon name="stAnnoB" /></StatusButton>
              <StatusButton $w={21} aria-label="Anotación"><Icon name="stAnnoC" /></StatusButton>
              <StatusButton $w={30}>1:1<Icon name="caret" /></StatusButton>
            </StatusGroup>
            <StatusGroup><StatusButton $w={33} aria-label="Espacio de trabajo"><Icon name="gear" /><Icon name="caret" /></StatusButton></StatusGroup>
            <StatusGroup><StatusButton $w={21} aria-label="Supervisor"><Icon name="stPlus" /></StatusButton></StatusGroup>
            <StatusGroup><StatusButton $w={24} aria-label="Aislar"><Icon name="stIsol" /></StatusButton></StatusGroup>
            <StatusGroup>
              <StatusButton $w={20} aria-label="Limpiar pantalla"><Icon name="stFull" /></StatusButton>
              <StatusButton $w={21} aria-label="Personalización"><Icon name="stMenu" /></StatusButton>
            </StatusGroup>
          </StatusTools>
        </StatusBar>
      </Window>

      <Taskbar>
        <IconButton $w={42} $h={35} aria-label="Inicio de Windows"><Icon name="win" /></IconButton>
        <SearchBox>
          <Icon name="search" />
          <input placeholder="Escribe aquí para buscar" aria-label="Buscar en Windows" />
        </SearchBox>
        {taskApps.map((n) => (
          <TaskButton key={n} $open={n === "edge"} aria-label={n}>
            <Icon name={n} />
            {n === "drive" && <Badge>1</Badge>}
          </TaskButton>
        ))}
        <TaskButton><Netflix>N</Netflix></TaskButton>
        <TaskButton aria-label="chrome"><Icon name="chrome" /></TaskButton>
        <TaskButton $on aria-label="autocad"><Icon name="acad" /></TaskButton>
        <Tray>
          {trayIcons.map(([n, w]) => (
            <IconButton key={n} $w={w} $h={35} aria-label={n}><Icon name={n} /></IconButton>
          ))}
          <Clock>08:02 p. m.<br />19/03/2020</Clock>
          <Notices aria-label="Notificaciones"><Icon name="tNote" /><Badge>4</Badge></Notices>
        </Tray>
      </Taskbar>
    </Screen>
  );
}
